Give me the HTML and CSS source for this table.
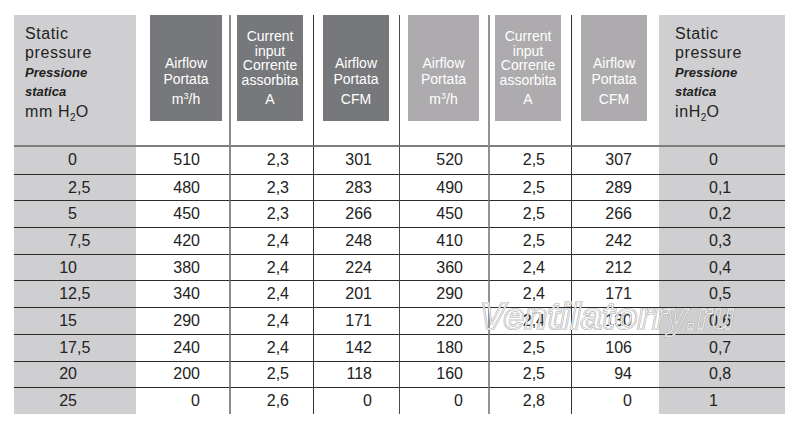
FILE: index.html
```html
<!DOCTYPE html>
<html>
<head>
<meta charset="utf-8">
<link rel="stylesheet" href="styles.css">
</head>
<body>
<div class="sheet">
  <div class="grid">
    <div class="hd side left">
      <div class="big">Static</div>
      <div class="big">pressure</div>
      <div class="it">Pressione</div>
      <div class="it">statica</div>
      <div class="big">mm H<sub>2</sub>O</div>
    </div>
    <div class="hd"><div class="blk dark b2"><div class="lbl">Airflow<br>Portata</div><div class="unit">m<sup>3</sup>/h</div></div></div>
    <div class="hd"><div class="blk dark b3"><div class="lbl tight">Current<br>input<br>Corrente<br>assorbita</div><div class="unit">A</div></div></div>
    <div class="hd"><div class="blk dark b4"><div class="lbl">Airflow<br>Portata</div><div class="unit">CFM</div></div></div>
    <div class="hd"><div class="blk light b5"><div class="lbl">Airflow<br>Portata</div><div class="unit">m<sup>3</sup>/h</div></div></div>
    <div class="hd"><div class="blk light b6"><div class="lbl tight">Current<br>input<br>Corrente<br>assorbita</div><div class="unit">A</div></div></div>
    <div class="hd"><div class="blk light b7"><div class="lbl">Airflow<br>Portata</div><div class="unit">CFM</div></div></div>
    <div class="hd side right">
      <div class="big">Static</div>
      <div class="big">pressure</div>
      <div class="it">Pressione</div>
      <div class="it">statica</div>
      <div class="big">inH<sub>2</sub>O</div>
    </div>

    <div class="d first"><span class="int">0</span></div><div class="d first">510</div><div class="d first">2,3</div><div class="d first">301</div><div class="d first">520</div><div class="d first">2,5</div><div class="d first">307</div><div class="d first">0</div>
    <div class="d"><span class="int">2</span>,5</div><div class="d">480</div><div class="d">2,3</div><div class="d">283</div><div class="d">490</div><div class="d">2,5</div><div class="d">289</div><div class="d">0,1</div>
    <div class="d"><span class="int">5</span></div><div class="d">450</div><div class="d">2,3</div><div class="d">266</div><div class="d">450</div><div class="d">2,5</div><div class="d">266</div><div class="d">0,2</div>
    <div class="d"><span class="int">7</span>,5</div><div class="d">420</div><div class="d">2,4</div><div class="d">248</div><div class="d">410</div><div class="d">2,5</div><div class="d">242</div><div class="d">0,3</div>
    <div class="d"><span class="int">10</span></div><div class="d">380</div><div class="d">2,4</div><div class="d">224</div><div class="d">360</div><div class="d">2,4</div><div class="d">212</div><div class="d">0,4</div>
    <div class="d"><span class="int">12</span>,5</div><div class="d">340</div><div class="d">2,4</div><div class="d">201</div><div class="d">290</div><div class="d">2,4</div><div class="d">171</div><div class="d">0,5</div>
    <div class="d"><span class="int">15</span></div><div class="d">290</div><div class="d">2,4</div><div class="d">171</div><div class="d">220</div><div class="d">2,4</div><div class="d">130</div><div class="d">0,6</div>
    <div class="d"><span class="int">17</span>,5</div><div class="d">240</div><div class="d">2,4</div><div class="d">142</div><div class="d">180</div><div class="d">2,5</div><div class="d">106</div><div class="d">0,7</div>
    <div class="d"><span class="int">20</span></div><div class="d">200</div><div class="d">2,5</div><div class="d">118</div><div class="d">160</div><div class="d">2,5</div><div class="d">94</div><div class="d">0,8</div>
    <div class="d"><span class="int">25</span></div><div class="d">0</div><div class="d">2,6</div><div class="d">0</div><div class="d">0</div><div class="d">2,8</div><div class="d">0</div><div class="d">1</div>
  </div>
  <div class="watermark" data-text="Ventilatorry.ru">Ventilatorry.ru</div>
</div>
</body>
</html>
```

FILE: styles.css
```css
html, body {
  margin: 0;
  padding: 0;
  background: #ffffff;
}

body {
  font-family: "Liberation Sans", Arial, sans-serif;
  color: #222222;
}

.sheet {
  position: relative;
  margin: 15px 0 0 14px;
  width: 771px;
}

.grid {
  display: grid;
  grid-template-columns: 122px 93px 84px 86px 89px 83px 88px 126px;
  grid-template-rows: 132px repeat(10, 26.7px);
}

.grid > div {
  box-sizing: border-box;
}

/* vertical rules */
.grid > :nth-child(8n+3) { border-left: 2px solid #8c8c8c; }
.grid > :nth-child(8n+4) { border-left: 1px solid #333333; }
.grid > :nth-child(8n+5) { border-left: 1px solid #4a4a4a; }
.grid > :nth-child(8n+6) { border-left: 2px solid #929292; }
.grid > :nth-child(8n+7) { border-left: 1px solid #333333; }

/* side grey columns */
.grid > :nth-child(8n+1),
.grid > :nth-child(8n+8) {
  background: #cfcfd1;
}

/* header */
.hd {
  border-bottom: 2px solid #7e7e7e;
  display: flex;
  align-items: flex-start;
}

.side {
  display: block;
  padding-top: 8.7px;
  line-height: 19.5px;
  color: #222222;
}

.side.left { padding-left: 11px; }
.side.right { padding-left: 16px; }

.big {
  font-size: 16px;
  letter-spacing: 0.6px;
}

.it {
  font-size: 13px;
  font-weight: bold;
  font-style: italic;
}

sub {
  font-size: 10px;
  line-height: 0;
  vertical-align: -4px;
  letter-spacing: 0;
}

sup {
  font-size: 9px;
  line-height: 0;
  vertical-align: 5px;
}

.blk {
  box-sizing: border-box;
  height: 106px;
  display: flex;
  flex-direction: column;
  justify-content: flex-end;
  align-items: center;
  text-align: center;
  padding-bottom: 14px;
  color: #ffffff;
  font-size: 14px;
}

.dark { background: #77787b; }
.light { background: #adabad; }

.b2 { margin-left: 14px; width: 72px; }
.b3 { margin-left: 6px; width: 66px; }
.b4 { margin-left: 9px; width: 66px; }
.b5 { margin-left: 8px; width: 71px; }
.b6 { margin-left: 5px; width: 66px; }
.b7 { margin-left: 9px; width: 66px; }

.lbl { line-height: 16px; }
.lbl.tight { line-height: 14.4px; }
.unit { margin-top: 4px; line-height: 16px; }

/* data rows */
.d {
  border-top: 1px solid #2b2b2b;
  display: flex;
  align-items: center;
  justify-content: flex-end;
  font-size: 16px;
  color: #222222;
}

.d.first { border-top: none; }

.grid > .d:nth-child(8n+1) { justify-content: flex-start; }
.grid > .d:nth-child(8n+2) { padding-right: 29px; }
.grid > .d:nth-child(8n+3) { padding-right: 24px; }
.grid > .d:nth-child(8n+4) { padding-right: 27px; }
.grid > .d:nth-child(8n+5) { padding-right: 25px; }
.grid > .d:nth-child(8n+6) { padding-right: 26px; }
.grid > .d:nth-child(8n+7) { padding-right: 27px; }
.grid > .d:nth-child(8n+8) { justify-content: flex-start; padding-left: 50px; }

.int {
  display: inline-block;
  width: 63px;
  text-align: right;
}

/* watermark overlay */
.watermark {
  position: absolute;
  left: 466px;
  top: 283px;
  font-size: 37px;
  line-height: 37px;
  font-weight: bold;
  font-style: italic;
  color: transparent;
  -webkit-text-stroke: 2px #a9a9a9;
  letter-spacing: 0.3px;
  pointer-events: none;
}

.watermark::after {
  content: attr(data-text);
  position: absolute;
  left: 0;
  top: 0;
  color: transparent;
  -webkit-text-stroke: 0.8px #ffffff;
}
```
